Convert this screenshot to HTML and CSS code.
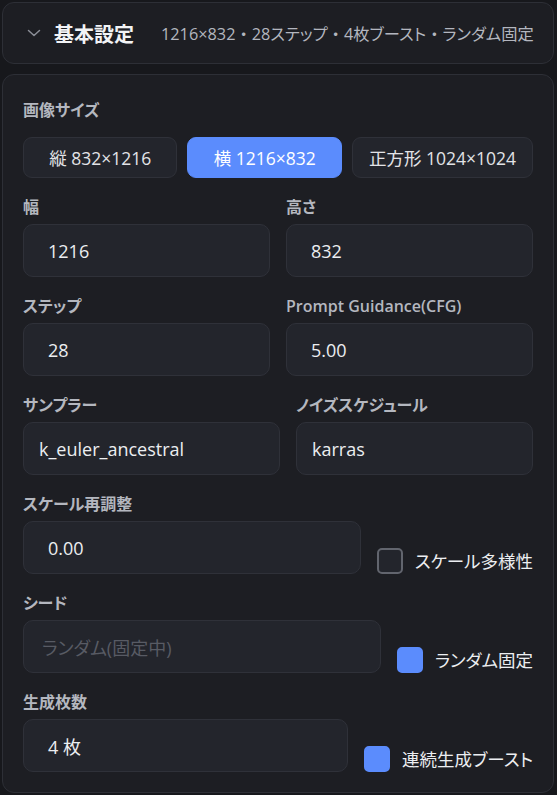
FILE: index.html
```html
<!DOCTYPE html>
<html lang="ja">
<head>
<meta charset="utf-8">
<link rel="stylesheet" href="styles.css">
</head>
<body>
<div class="page">
  <div class="header">
    <svg class="chevron" width="14" height="8" viewBox="0 0 14 8"><path d="M1.5 1.5 L7 6.5 L12.5 1.5" fill="none" stroke="#8b8e97" stroke-width="1.5" stroke-linecap="round" stroke-linejoin="round"/></svg>
    <span class="title">基本設定</span>
    <span class="summary">1216×832<span class="dot">・</span>28ステップ<span class="dot">・</span>4枚ブースト<span class="dot">・</span>ランダム固定</span>
  </div>

  <div class="card">
    <div class="size-section">
      <div class="label size-label">画像サイズ</div>
      <div class="size-buttons">
        <button class="size-btn">縦 832×1216</button>
        <button class="size-btn active">横 1216×832</button>
        <button class="size-btn">正方形 1024×1024</button>
      </div>
    </div>

    <div class="row two">
      <div class="field"><div class="label">幅</div><div class="input">1216</div></div>
      <div class="field"><div class="label">高さ</div><div class="input">832</div></div>
    </div>

    <div class="row two">
      <div class="field"><div class="label">ステップ</div><div class="input">28</div></div>
      <div class="field"><div class="label latin">Prompt Guidance(CFG)</div><div class="input">5.00</div></div>
    </div>

    <div class="row two uneven">
      <div class="field"><div class="label">サンプラー</div><div class="input select">k_euler_ancestral</div></div>
      <div class="field"><div class="label">ノイズスケジュール</div><div class="input select">karras</div></div>
    </div>

    <div class="row inline">
      <div class="field grow"><div class="label">スケール再調整</div><div class="input">0.00</div></div>
      <div class="check"><span class="box"></span><span class="check-text">スケール多様性</span></div>
    </div>

    <div class="row inline">
      <div class="field grow"><div class="label">シード</div><div class="input placeholder">ランダム(固定中)</div></div>
      <div class="check"><span class="box on"></span><span class="check-text">ランダム固定</span></div>
    </div>

    <div class="row inline">
      <div class="field grow"><div class="label">生成枚数</div><div class="input">4 枚</div></div>
      <div class="check"><span class="box on"></span><span class="check-text">連続生成ブースト</span></div>
    </div>
  </div>
</div>
</body>
</html>
```

FILE: styles.css
```css
* { box-sizing: border-box; }

html, body {
  margin: 0;
  background: #17181c;
}

body {
  font-family: "Open Sans", "Noto Sans CJK JP", sans-serif;
  font-feature-settings: "palt";
  color: #e6e7ea;
}

.page {
  padding: 2px 3px 2px 2px;
}

.header {
  height: 62px;
  background: #1d1e23;
  border: 1px solid #2d2f36;
  border-radius: 12px;
  display: flex;
  align-items: center;
  padding-left: 24px;
  white-space: nowrap;
}

.chevron {
  flex: none;
}

.title {
  margin-left: 13px;
  font-size: 20px;
  font-weight: 700;
  color: #f2f3f5;
}

.summary {
  margin-left: 27px;
  font-size: 16.3px;
  color: #b3b6bf;
}

.summary .dot {
  font-feature-settings: normal;
}

.card {
  margin-top: 10px;
  background: #1d1e23;
  border: 1px solid #2d2f36;
  border-radius: 12px;
  padding: 20px 20px 20px 20px;
}

.label {
  font-size: 16px;
  font-weight: 700;
  line-height: 18px;
  height: 18px;
  color: #b4b7bf;
  margin-bottom: 8px;
  white-space: nowrap;
}

.label.latin {
  font-weight: 600;
}

.size-label {
  margin-top: 6px;
  margin-bottom: 18px;
}

.size-buttons {
  display: flex;
  gap: 10px;
}

.size-btn {
  flex: 1 1 0;
  height: 41px;
  padding: 0 16px;
  border: 1px solid #2f3139;
  border-radius: 9px;
  background: #23252c;
  color: #e2e3e7;
  font-family: inherit;
  font-feature-settings: "palt";
  font-size: 17.5px;
  white-space: nowrap;
}

.size-btn.active {
  background: #5b8cfd;
  border-color: #5b8cfd;
  color: #ffffff;
}

.row {
  margin-top: 20px;
}

.row.two {
  display: grid;
  grid-template-columns: 1fr 1fr;
  gap: 16px;
}

.row.uneven {
  grid-template-columns: 257fr 237fr;
}

.row.inline {
  display: flex;
  align-items: flex-end;
  gap: 16px;
}

.field.grow {
  flex: 1 1 auto;
}

.input {
  height: 53px;
  background: #23252c;
  border: 1px solid #2f3139;
  border-radius: 10px;
  display: flex;
  align-items: center;
  padding-left: 24px;
  font-size: 18px;
  color: #eceef1;
  white-space: nowrap;
}

.input.select {
  padding-left: 15px;
}

.input.placeholder {
  padding-left: 18px;
  color: #585b64;
}

.check {
  flex: none;
  display: flex;
  align-items: center;
  gap: 12px;
  height: 26px;
}

.box {
  width: 26px;
  height: 26px;
  border-radius: 5px;
  border: 2px solid #62656e;
  background: #23252c;
}

.box.on {
  background: #5b8cfd;
  border-color: #5b8cfd;
}

.check-text {
  font-size: 17.5px;
  line-height: 26px;
  color: #eceef1;
}
```
